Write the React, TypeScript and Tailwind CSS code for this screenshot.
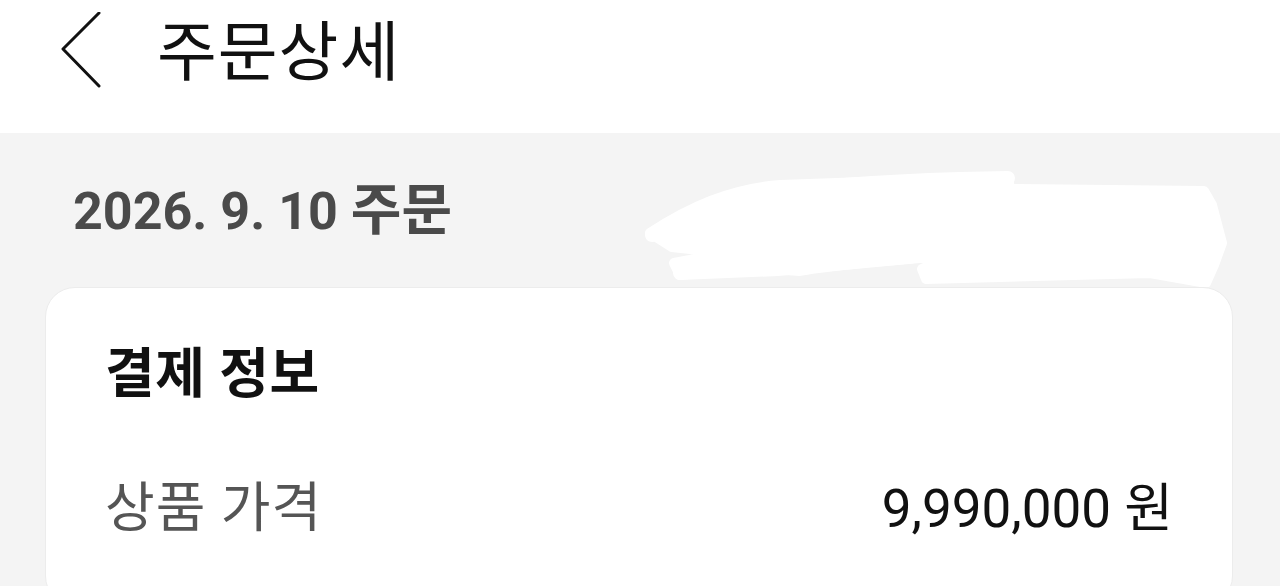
import React from 'react';

const font = "font-['Roboto','Noto_Sans_CJK_KR',sans-serif]";

function BackChevron() {
  return (
    <svg width="40" height="76" viewBox="0 0 40 76" fill="none" aria-hidden="true">
      <path d="M38 1 L2 37 L38 74" stroke="#111" strokeWidth="3" strokeLinecap="round" strokeLinejoin="round" />
    </svg>
  );
}

// white marker scribble covering hidden text
function Scribble() {
  return (
    <svg className="absolute left-0 top-0 pointer-events-none" width="1280" height="154" viewBox="0 0 1280 154" aria-hidden="true">
      <g fill="#fff" stroke="#fff" strokeLinejoin="round" strokeLinecap="round">
        <path
          strokeWidth="10"
          d="M650 100 C690 74 730 56 780 52 L1008 44 L1010 56 L1204 58 L1212 72 L1222 110 L1214 132 L1206 150 L1150 140 L926 146 L922 136 L952 122 L778 138 L680 142 L674 130 L726 120 L672 114 Z"
        />
        <path strokeWidth="14" fill="none" d="M652 102 C700 70 760 52 960 46 L1008 45" />
        <path strokeWidth="14" fill="none" d="M680 140 C720 136 760 132 800 136 C840 128 900 126 960 118" />
      </g>
    </svg>
  );
}

export default function App() {
  return (
    <div className={`w-[1280px] h-[586px] overflow-hidden bg-[#f4f4f4] ${font}`}>
      {/* Header */}
      <header className="h-[133px] bg-white pt-[12px]">
        <div className="flex items-center h-[76px] pl-[61px]">
          <button className="shrink-0" aria-label="뒤로">
            <BackChevron />
          </button>
          <h1 className="ml-[56px] mt-[6px] text-[65px] leading-none tracking-[1px] text-[#111]">주문상세</h1>
        </div>
      </header>

      {/* Order date */}
      <div className="relative h-[154px] flex items-center pl-[73px]">
        <span className="text-[52px] leading-none font-bold text-[#4a4a4a]">
          2026. 9. 10 <span className="text-[55px]">주문</span>
        </span>
        <Scribble />
      </div>

      {/* Payment card */}
      <div className="ml-[45px] mr-[47px] rounded-[30px] bg-white border border-[#ececec] px-[59px] pt-[51px] pb-[60px]">
        <h2 className="text-[54px] leading-[72px] font-bold tracking-[0.5px] text-[#111]">결제 정보</h2>
        <div className="mt-[62px] flex items-center justify-between leading-[72px]">
          <span className="text-[54px] tracking-[1px] text-[#555]">상품 가격</span>
          <span className="text-[53px] text-[#111]">9,990,000 원</span>
        </div>
      </div>
    </div>
  );
}
